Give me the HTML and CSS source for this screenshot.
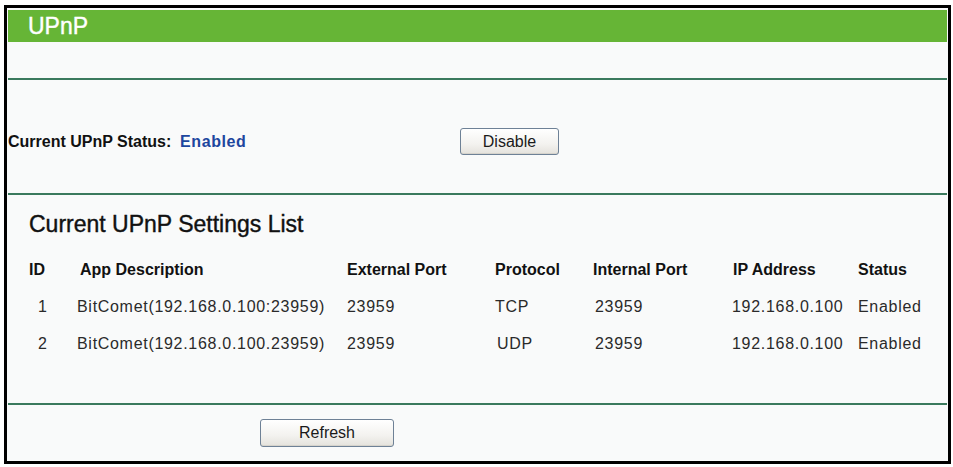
FILE: index.html
```html
<!DOCTYPE html>
<html>
<head>
<meta charset="utf-8">
<title>UPnP</title>
<link rel="stylesheet" href="styles.css">
</head>
<body>
<div class="frame">
  <div class="title-bar">UPnP</div>
  <div class="spacer"></div>
  <div class="rule"></div>
  <div class="status-row">
    <span class="status-label">Current UPnP Status:</span>
    <span class="status-value">Enabled</span>
    <button class="btn btn-disable">Disable</button>
  </div>
  <div class="rule"></div>
  <div class="list-section">
    <h2 class="list-title">Current UPnP Settings List</h2>
    <table class="list">
      <colgroup>
        <col class="c-id"><col class="c-app"><col class="c-ext"><col class="c-proto"><col class="c-int"><col class="c-ip"><col class="c-status">
      </colgroup>
      <thead>
        <tr>
          <th>ID</th><th>App Description</th><th>External Port</th><th>Protocol</th><th>Internal Port</th><th>IP Address</th><th>Status</th>
        </tr>
      </thead>
      <tbody>
        <tr>
          <td class="id">1</td><td class="app">BitComet(192.168.0.100:23959)</td><td>23959</td><td>TCP</td><td class="int">23959</td><td class="ip">192.168.0.100</td><td>Enabled</td>
        </tr>
        <tr>
          <td class="id">2</td><td class="app">BitComet(192.168.0.100.23959)</td><td>23959</td><td class="udp">UDP</td><td class="int">23959</td><td class="ip">192.168.0.100</td><td>Enabled</td>
        </tr>
      </tbody>
    </table>
  </div>
  <div class="rule"></div>
  <div class="action-row">
    <button class="btn btn-refresh">Refresh</button>
  </div>
</div>
</body>
</html>
```

FILE: styles.css
```css
html, body {
  margin: 0;
  padding: 0;
  background: #ffffff;
}

body {
  font-family: "Liberation Sans", Arial, sans-serif;
  color: #111;
}

.frame {
  margin: 5px 0 0 4px;
  width: 939px;
  border: 3px solid #000;
  padding: 2px 1px 3px 1px;
  background: #f9fafa;
}

.title-bar {
  height: 32px;
  line-height: 32px;
  background: #66b536;
  color: #ffffff;
  font-size: 23px;
  padding-left: 20px;
  -webkit-text-stroke: 0.4px #ffffff;
}

.spacer {
  height: 36px;
}

.rule {
  height: 2px;
  background: #3b7a5d;
}

.status-row {
  display: flex;
  align-items: center;
  height: 27px;
  padding: 48px 0 38px 0;
  font-size: 16px;
}

.status-label {
  font-weight: bold;
  color: #111;
  width: 172px;
}

.status-value {
  font-weight: bold;
  color: #1d469e;
  width: 280px;
  letter-spacing: 0.6px;
}

.btn {
  font-family: "Liberation Sans", Arial, sans-serif;
  font-size: 16px;
  color: #1a1a1a;
  border: 1px solid #6e8196;
  border-radius: 3px;
  background: linear-gradient(#ffffff, #f3f2ef 60%, #e4e2dc);
  padding: 0;
  box-shadow: inset 0 -1px 0 #d6d3cc;
}

.btn-disable {
  width: 99px;
  height: 27px;
}

.list-section {
  padding: 15px 0 41px 21px;
}

.list-title {
  margin: 0;
  font-size: 23px;
  font-weight: normal;
  line-height: 28px;
  color: #111;
  -webkit-text-stroke: 0.4px #111;
}

.list {
  margin-top: 13px;
  border-collapse: collapse;
  table-layout: fixed;
  width: 918px;
}

.c-id { width: 51px; }
.c-app { width: 267px; }
.c-ext { width: 148px; }
.c-proto { width: 98px; }
.c-int { width: 140px; }
.c-ip { width: 125px; }
.c-status { width: 89px; }

.list th,
.list td {
  height: 37px;
  padding: 0;
  text-align: left;
  vertical-align: middle;
  white-space: nowrap;
  font-size: 16px;
}

.list th {
  font-weight: bold;
  color: #111;
}

.list td {
  font-weight: normal;
  color: #2a2a2a;
  letter-spacing: 0.7px;
}

.list td.id {
  padding-left: 9px;
}

.list td.app {
  position: relative;
  left: -3px;
}

.list td.udp {
  padding-left: 2px;
}

.list td.int {
  padding-left: 2px;
}

.list td.ip {
  position: relative;
  left: -1px;
}

.action-row {
  padding: 14px 0 11px 252px;
  display: flex;
}

.btn-refresh {
  width: 134px;
  height: 28px;
}
```
